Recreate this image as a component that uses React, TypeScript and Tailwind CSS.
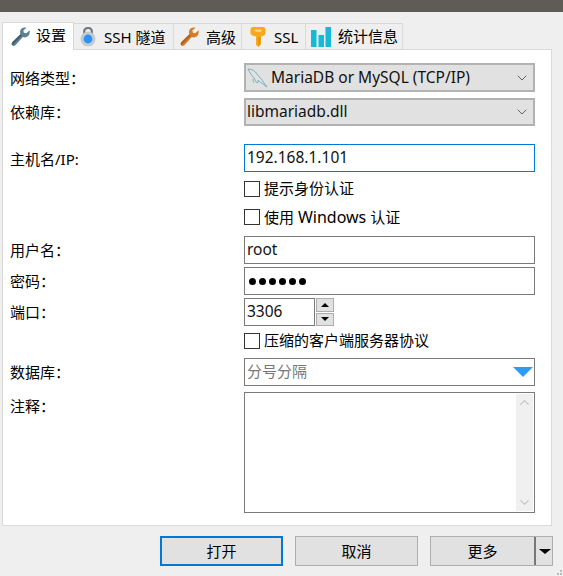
import React from "react";
import { ChevronDown, ChevronUp } from "lucide-react";

const FONT = "font-['Noto_Sans','Noto_Sans_CJK_SC',sans-serif]";

function Wrench({ color, shade }: { color: string; shade: string }) {
  return (
    <svg width="20" height="20" viewBox="0 0 22 22" className="shrink-0">
      <path d="M20.5 3.5 L16.8 7 L14.2 6.2 L13.6 3.6 L17 1 C14 -0.2 10.6 1.4 10 4.6 C9.8 6 10 7 10.4 8 L1.6 16.6 C0.4 18 0.6 19.4 1.4 20.2 C2.4 21.2 3.8 21 4.8 20 L13 11 C14.4 11.6 16 11.6 17.6 10.8 C20 9.6 21 6.4 20.5 3.5 Z" fill={color} />
      <path d="M10.4 8 L1.6 16.6 C0.4 18 0.6 19.4 1.4 20.2 L12 9.6 Z" fill={shade} />
    </svg>
  );
}

function Lock() {
  return (
    <svg width="16" height="21" viewBox="0 0 16 21" className="shrink-0">
      <path d="M4.2 9 V5.5 C4.2 0.8 11.8 0.8 11.8 5.5 V9" fill="none" stroke="#70757a" strokeWidth="2.2" />
      <circle cx="8" cy="13" r="7.5" fill="#c3c9cd" />
      <circle cx="8" cy="13" r="4.4" fill="#2b93f5" />
    </svg>
  );
}

function Key() {
  return (
    <svg width="16" height="22" viewBox="0 0 16 22" className="shrink-0">
      <path d="M3 1 H13 C14.5 1 15.5 2 15.5 3.5 V7 C15.5 9 14 10 11 10.5 V18 L8.5 21 L6 19 V10.5 C2.5 10 0.5 9 0.5 7 V3.5 C0.5 2 1.5 1 3 1 Z" fill="#f7a81d" />
      <rect x="4.5" y="3.5" width="7" height="2.2" rx="1" fill="#fdd77f" />
      <rect x="8.5" y="11" width="1.6" height="8" fill="#e08c0c" />
    </svg>
  );
}

function Bars() {
  return (
    <svg width="20" height="20" viewBox="0 0 20 20" className="shrink-0">
      <rect x="0" y="3" width="5.5" height="17" fill="#12bcd8" />
      <rect x="7.5" y="8" width="5.5" height="12" fill="#12bcd8" />
      <rect x="14.5" y="0" width="5.5" height="20" fill="#12bcd8" />
    </svg>
  );
}

function Dolphin() {
  return (
    <svg width="21" height="20" viewBox="0 0 21 20" className="shrink-0" fill="none" stroke="#6fa9bb" strokeWidth="0.9">
      <path d="M1 1 C5 1 8 3 10 6 C12 9 15 11 17 15 L20 19 C17 17 15 15 13 14 L11 12 C11 14 11 15 10 15 C8 13 8 11 7 10 C5 8 3 5 1 1 Z" />
      <path d="M6 11 C6 13 6.5 14 7.5 15" />
    </svg>
  );
}

function Tab({ icon, label, active, cls, textCls = "" }: { icon: React.ReactNode; label: string; active?: boolean; cls: string; textCls?: string }) {
  return (
    <div
      className={
        active
          ? `${cls} h-[28px] bg-white border border-b-0 border-[#d9d9d9] flex items-center relative z-10 -mb-px`
          : `${cls} h-[26px] bg-[#efefef] border border-b-0 border-l-0 border-[#d9d9d9] flex items-center`
      }
    >
      {icon}
      <span className={`text-[15px] leading-none text-black whitespace-nowrap ${textCls}`}>{label}</span>
    </div>
  );
}

function Row({ label, children, cls, labelCls = "pt-[5px]" }: { label?: string; children: React.ReactNode; cls: string; labelCls?: string }) {
  return (
    <div className={`flex items-start ${cls}`}>
      <div className={`w-[234px] shrink-0 text-[15px] leading-[18px] text-black ${labelCls}`}>{label}</div>
      <div className="w-[291px] shrink-0">{children}</div>
    </div>
  );
}

function Select({ children, h }: { children: React.ReactNode; h: string }) {
  return (
    <div className={`${h} bg-[#e1e1e1] border-2 border-[#b2b2b2] flex items-center pl-[1px] pr-[3px]`}>
      <div className="flex-1 flex items-center min-w-0">{children}</div>
      <ChevronDown size={16} strokeWidth={1.1} color="#333" />
    </div>
  );
}

function Field({ children, cls = "", w = "w-full" }: { children?: React.ReactNode; cls?: string; w?: string }) {
  return (
    <div className={`${w} h-[28px] bg-white border flex items-center pl-[2px] text-[15.5px] text-[#111] ${cls || "border-[#7a7a7a]"}`}>
      {children}
    </div>
  );
}

function Check({ label }: { label: React.ReactNode }) {
  return (
    <div className="flex items-center gap-[4px] h-[17px]">
      <div className="w-[16px] h-[16px] border border-[#333] bg-white shrink-0" />
      <span className="text-[15px] leading-none text-black whitespace-nowrap">{label}</span>
    </div>
  );
}

function Btn({ label, primary, more }: { label: string; primary?: boolean; more?: boolean }) {
  return (
    <div className={`w-[123px] h-[30px] bg-[#e1e1e1] flex items-center relative ${primary ? "border-2 border-[#0078d7]" : "border border-[#adadad]"}`}>
      <span className={`text-[15px] leading-none text-black text-center ${more ? "w-[103px]" : "w-full"}`}>{label}</span>
      {more && (
        <div className="absolute right-0 inset-y-0 w-[18px] flex items-center">
          <div className="w-[1.5px] h-[28px] bg-[#777]" />
          <div className="ml-[3px] w-0 h-0 border-x-[6px] border-x-transparent border-t-[5px] border-t-black" />
        </div>
      )}
    </div>
  );
}

export default function App() {
  return (
    <div className={`w-[563px] h-[576px] bg-[#efefef] overflow-hidden relative ${FONT}`}>
      <div className="h-[12px] bg-[#5f5b57]" />
      <div className="flex items-end pl-[2px] mt-[10px] h-[27px]">
        <Tab active cls="w-[72px] pl-[8px] gap-[5px]" icon={<Wrench color="#5f7f92" shade="#41606f" />} label="设置" textCls="mb-[2px]" />
        <Tab cls="w-[100px] pl-[6px] gap-[8px]" icon={<Lock />} label="SSH 隧道" textCls="mt-[1px]" />
        <Tab cls="w-[68px] pl-[6px] gap-[6px]" icon={<Wrench color="#d27d2c" shade="#b3621b" />} label="高级" textCls="mt-[1px]" />
        <Tab cls="w-[64px] pl-[8px] gap-[8px]" icon={<Key />} label="SSL" textCls="mt-[1px]" />
        <Tab cls="w-[97px] pl-[5px] gap-[7px]" icon={<Bars />} label="统计信息" />
      </div>
      <div className="ml-[2px] w-[550px] h-[477px] bg-white border border-[#d9d9d9] pl-[7px] pt-[13px]">
        <Row label="网络类型：" cls="" labelCls="pt-[6px]">
          <Select h="h-[29px]">
            <Dolphin />
            <span className="ml-[3px] text-[15.5px] text-[#111] whitespace-nowrap">MariaDB or MySQL (TCP/IP)</span>
          </Select>
        </Row>
        <Row label="依赖库：" cls="mt-[6px]">
          <Select h="h-[28px]">
            <span className="text-[15.5px] text-[#111]">libmariadb.dll</span>
          </Select>
        </Row>
        <Row label="主机名/IP:" cls="mt-[18px]" labelCls="pt-[6px]">
          <Field cls="border-[#0078d7]">192.168.1.101</Field>
        </Row>
        <Row cls="mt-[8px] h-[17px]">
          <Check label="提示身份认证" />
        </Row>
        <Row cls="mt-[11px] h-[17px]">
          <Check label={<>使用 <span className="text-[16px]">Windows</span> 认证</>} />
        </Row>
        <Row label="用户名：" cls="mt-[11px]">
          <Field>root</Field>
        </Row>
        <Row label="密码：" cls="mt-[3px]">
          <Field>
            <div className="flex gap-[3px] pl-[2px]">
              {[0, 1, 2, 3, 4, 5].map((i) => (
                <div key={i} className="w-[7px] h-[7px] rounded-full bg-black" />
              ))}
            </div>
          </Field>
        </Row>
        <Row label="端口：" cls="mt-[3px]">
          <div className="flex gap-[1px]">
            <Field w="w-[71px]">3306</Field>
            <div className="w-[18px] h-[28px] flex flex-col gap-[1px]">
              <div className="flex-1 bg-[#e1e1e1] border border-[#adadad] flex items-center justify-center">
                <div className="w-0 h-0 border-x-[4px] border-x-transparent border-b-[4px] border-b-black" />
              </div>
              <div className="flex-1 bg-[#e1e1e1] border border-[#adadad] flex items-center justify-center">
                <div className="w-0 h-0 border-x-[4px] border-x-transparent border-t-[4px] border-t-black" />
              </div>
            </div>
          </div>
        </Row>
        <Row cls="mt-[6px] h-[17px]">
          <Check label="压缩的客户端服务器协议" />
        </Row>
        <Row label="数据库：" cls="mt-[9px]">
          <Field cls="border-[#7a7a7a] pl-[1px]">
            <span className="flex-1 text-[15px] leading-none mb-[2px] text-[#777]">分号分隔</span>
            <div className="mr-[1px] w-0 h-0 border-x-[10px] border-x-transparent border-t-[10px] border-t-[#2f9bf5]" />
          </Field>
        </Row>
        <Row label="注释：" cls="mt-[6px]">
          <div className="h-[121px] border border-[#7a7a7a] bg-white flex justify-end p-[1px]">
            <div className="w-[17px] bg-[#f0f0f0] flex flex-col items-center justify-between py-[1px]">
              <ChevronUp size={15} strokeWidth={2} color="#c4c4c4" />
              <ChevronDown size={15} strokeWidth={2} color="#c4c4c4" />
            </div>
          </div>
        </Row>
      </div>
      <div className="flex justify-end gap-[12px] pr-[10px] mt-[10px]">
        <Btn primary label="打开" />
        <Btn label="取消" />
        <Btn more label="更多" />
      </div>
      <div className="absolute right-[1px] bottom-[1px] grid grid-cols-3 gap-[1px] w-[8px]">
        <i /><i /><i className="w-[2px] h-[2px] bg-[#bbb]" />
        <i /><i className="w-[2px] h-[2px] bg-[#bbb]" /><i className="w-[2px] h-[2px] bg-[#bbb]" />
      </div>
    </div>
  );
}
